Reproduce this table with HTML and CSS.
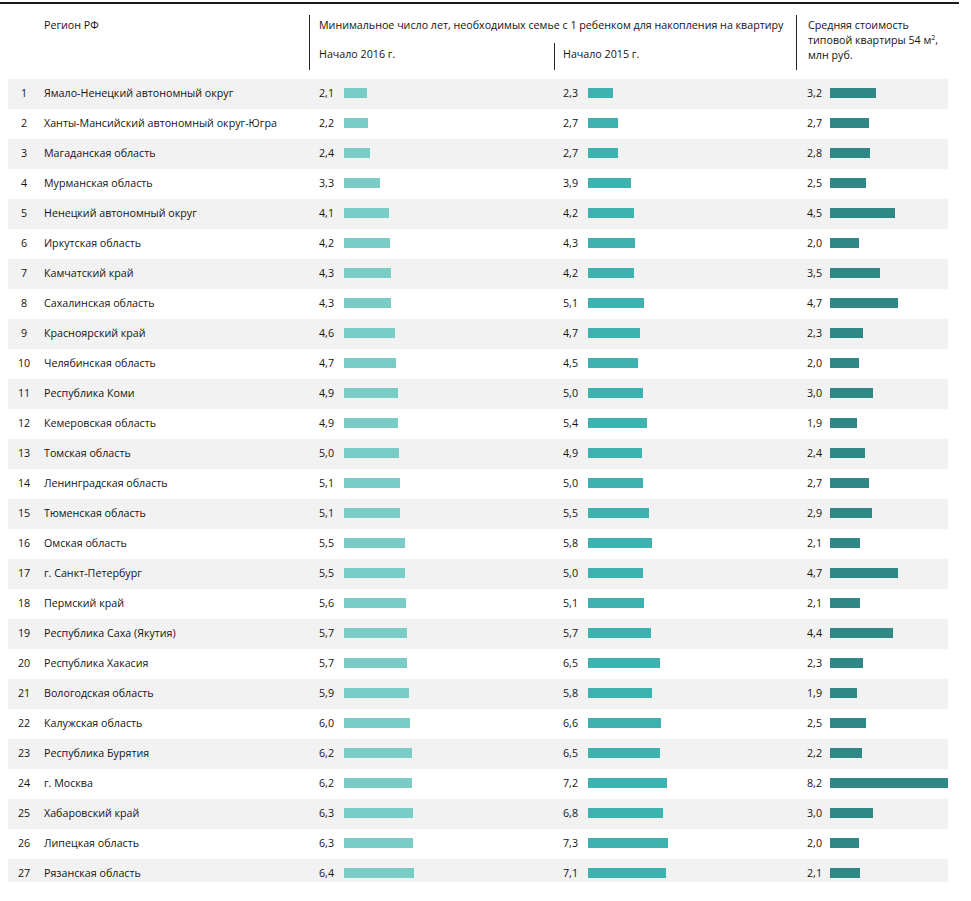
FILE: index.html
```html
<!DOCTYPE html>
<html lang="ru">
<head>
<meta charset="utf-8">
<title>Регион РФ</title>
<link rel="stylesheet" href="styles.css">
</head>
<body>
<div class="chart">
  <div class="head">
    <div class="h-num"></div>
    <div class="h-name">Регион РФ</div>
    <div class="h-years">
      <div class="h-title">Минимальное число лет, необходимых семье с 1 ребенком для накопления на квартиру</div>
      <div class="h-sub">
        <div class="h-sub1">Начало 2016 г.</div>
        <div class="h-sub2">Начало 2015 г.</div>
      </div>
    </div>
    <div class="h-price">Средняя стоимость<br>типовой квартиры 54 м<sup>2</sup>,<br>млн руб.</div>
  </div>
  <div class="rows">
    <div class="row"><div class="num">1</div><div class="name">Ямало-Ненецкий автономный округ</div><div class="c c2"><span class="v">2,1</span><span class="bar b2" style="width:23px"></span></div><div class="c c3"><span class="v">2,3</span><span class="bar b3" style="width:25px"></span></div><div class="c c4"><span class="v">3,2</span><span class="bar b4" style="width:46px"></span></div></div>
    <div class="row"><div class="num">2</div><div class="name">Ханты-Мансийский автономный округ-Югра</div><div class="c c2"><span class="v">2,2</span><span class="bar b2" style="width:24px"></span></div><div class="c c3"><span class="v">2,7</span><span class="bar b3" style="width:30px"></span></div><div class="c c4"><span class="v">2,7</span><span class="bar b4" style="width:39px"></span></div></div>
    <div class="row"><div class="num">3</div><div class="name">Магаданская область</div><div class="c c2"><span class="v">2,4</span><span class="bar b2" style="width:26px"></span></div><div class="c c3"><span class="v">2,7</span><span class="bar b3" style="width:30px"></span></div><div class="c c4"><span class="v">2,8</span><span class="bar b4" style="width:40px"></span></div></div>
    <div class="row"><div class="num">4</div><div class="name">Мурманская область</div><div class="c c2"><span class="v">3,3</span><span class="bar b2" style="width:36px"></span></div><div class="c c3"><span class="v">3,9</span><span class="bar b3" style="width:43px"></span></div><div class="c c4"><span class="v">2,5</span><span class="bar b4" style="width:36px"></span></div></div>
    <div class="row"><div class="num">5</div><div class="name">Ненецкий автономный округ</div><div class="c c2"><span class="v">4,1</span><span class="bar b2" style="width:45px"></span></div><div class="c c3"><span class="v">4,2</span><span class="bar b3" style="width:46px"></span></div><div class="c c4"><span class="v">4,5</span><span class="bar b4" style="width:65px"></span></div></div>
    <div class="row"><div class="num">6</div><div class="name">Иркутская область</div><div class="c c2"><span class="v">4,2</span><span class="bar b2" style="width:46px"></span></div><div class="c c3"><span class="v">4,3</span><span class="bar b3" style="width:47px"></span></div><div class="c c4"><span class="v">2,0</span><span class="bar b4" style="width:29px"></span></div></div>
    <div class="row"><div class="num">7</div><div class="name">Камчатский край</div><div class="c c2"><span class="v">4,3</span><span class="bar b2" style="width:47px"></span></div><div class="c c3"><span class="v">4,2</span><span class="bar b3" style="width:46px"></span></div><div class="c c4"><span class="v">3,5</span><span class="bar b4" style="width:50px"></span></div></div>
    <div class="row"><div class="num">8</div><div class="name">Сахалинская область</div><div class="c c2"><span class="v">4,3</span><span class="bar b2" style="width:47px"></span></div><div class="c c3"><span class="v">5,1</span><span class="bar b3" style="width:56px"></span></div><div class="c c4"><span class="v">4,7</span><span class="bar b4" style="width:68px"></span></div></div>
    <div class="row"><div class="num">9</div><div class="name">Красноярский край</div><div class="c c2"><span class="v">4,6</span><span class="bar b2" style="width:51px"></span></div><div class="c c3"><span class="v">4,7</span><span class="bar b3" style="width:52px"></span></div><div class="c c4"><span class="v">2,3</span><span class="bar b4" style="width:33px"></span></div></div>
    <div class="row"><div class="num">10</div><div class="name">Челябинская область</div><div class="c c2"><span class="v">4,7</span><span class="bar b2" style="width:52px"></span></div><div class="c c3"><span class="v">4,5</span><span class="bar b3" style="width:50px"></span></div><div class="c c4"><span class="v">2,0</span><span class="bar b4" style="width:29px"></span></div></div>
    <div class="row"><div class="num">11</div><div class="name">Республика Коми</div><div class="c c2"><span class="v">4,9</span><span class="bar b2" style="width:54px"></span></div><div class="c c3"><span class="v">5,0</span><span class="bar b3" style="width:55px"></span></div><div class="c c4"><span class="v">3,0</span><span class="bar b4" style="width:43px"></span></div></div>
    <div class="row"><div class="num">12</div><div class="name">Кемеровская область</div><div class="c c2"><span class="v">4,9</span><span class="bar b2" style="width:54px"></span></div><div class="c c3"><span class="v">5,4</span><span class="bar b3" style="width:59px"></span></div><div class="c c4"><span class="v">1,9</span><span class="bar b4" style="width:27px"></span></div></div>
    <div class="row"><div class="num">13</div><div class="name">Томская область</div><div class="c c2"><span class="v">5,0</span><span class="bar b2" style="width:55px"></span></div><div class="c c3"><span class="v">4,9</span><span class="bar b3" style="width:54px"></span></div><div class="c c4"><span class="v">2,4</span><span class="bar b4" style="width:35px"></span></div></div>
    <div class="row"><div class="num">14</div><div class="name">Ленинградская область</div><div class="c c2"><span class="v">5,1</span><span class="bar b2" style="width:56px"></span></div><div class="c c3"><span class="v">5,0</span><span class="bar b3" style="width:55px"></span></div><div class="c c4"><span class="v">2,7</span><span class="bar b4" style="width:39px"></span></div></div>
    <div class="row"><div class="num">15</div><div class="name">Тюменская область</div><div class="c c2"><span class="v">5,1</span><span class="bar b2" style="width:56px"></span></div><div class="c c3"><span class="v">5,5</span><span class="bar b3" style="width:61px"></span></div><div class="c c4"><span class="v">2,9</span><span class="bar b4" style="width:42px"></span></div></div>
    <div class="row"><div class="num">16</div><div class="name">Омская область</div><div class="c c2"><span class="v">5,5</span><span class="bar b2" style="width:61px"></span></div><div class="c c3"><span class="v">5,8</span><span class="bar b3" style="width:64px"></span></div><div class="c c4"><span class="v">2,1</span><span class="bar b4" style="width:30px"></span></div></div>
    <div class="row"><div class="num">17</div><div class="name">г. Санкт-Петербург</div><div class="c c2"><span class="v">5,5</span><span class="bar b2" style="width:61px"></span></div><div class="c c3"><span class="v">5,0</span><span class="bar b3" style="width:55px"></span></div><div class="c c4"><span class="v">4,7</span><span class="bar b4" style="width:68px"></span></div></div>
    <div class="row"><div class="num">18</div><div class="name">Пермский край</div><div class="c c2"><span class="v">5,6</span><span class="bar b2" style="width:62px"></span></div><div class="c c3"><span class="v">5,1</span><span class="bar b3" style="width:56px"></span></div><div class="c c4"><span class="v">2,1</span><span class="bar b4" style="width:30px"></span></div></div>
    <div class="row"><div class="num">19</div><div class="name">Республика Саха (Якутия)</div><div class="c c2"><span class="v">5,7</span><span class="bar b2" style="width:63px"></span></div><div class="c c3"><span class="v">5,7</span><span class="bar b3" style="width:63px"></span></div><div class="c c4"><span class="v">4,4</span><span class="bar b4" style="width:63px"></span></div></div>
    <div class="row"><div class="num">20</div><div class="name">Республика Хакасия</div><div class="c c2"><span class="v">5,7</span><span class="bar b2" style="width:63px"></span></div><div class="c c3"><span class="v">6,5</span><span class="bar b3" style="width:72px"></span></div><div class="c c4"><span class="v">2,3</span><span class="bar b4" style="width:33px"></span></div></div>
    <div class="row"><div class="num">21</div><div class="name">Вологодская область</div><div class="c c2"><span class="v">5,9</span><span class="bar b2" style="width:65px"></span></div><div class="c c3"><span class="v">5,8</span><span class="bar b3" style="width:64px"></span></div><div class="c c4"><span class="v">1,9</span><span class="bar b4" style="width:27px"></span></div></div>
    <div class="row"><div class="num">22</div><div class="name">Калужская область</div><div class="c c2"><span class="v">6,0</span><span class="bar b2" style="width:66px"></span></div><div class="c c3"><span class="v">6,6</span><span class="bar b3" style="width:73px"></span></div><div class="c c4"><span class="v">2,5</span><span class="bar b4" style="width:36px"></span></div></div>
    <div class="row"><div class="num">23</div><div class="name">Республика Бурятия</div><div class="c c2"><span class="v">6,2</span><span class="bar b2" style="width:68px"></span></div><div class="c c3"><span class="v">6,5</span><span class="bar b3" style="width:72px"></span></div><div class="c c4"><span class="v">2,2</span><span class="bar b4" style="width:32px"></span></div></div>
    <div class="row"><div class="num">24</div><div class="name">г. Москва</div><div class="c c2"><span class="v">6,2</span><span class="bar b2" style="width:68px"></span></div><div class="c c3"><span class="v">7,2</span><span class="bar b3" style="width:79px"></span></div><div class="c c4"><span class="v">8,2</span><span class="bar b4" style="width:118px"></span></div></div>
    <div class="row"><div class="num">25</div><div class="name">Хабаровский край</div><div class="c c2"><span class="v">6,3</span><span class="bar b2" style="width:69px"></span></div><div class="c c3"><span class="v">6,8</span><span class="bar b3" style="width:75px"></span></div><div class="c c4"><span class="v">3,0</span><span class="bar b4" style="width:43px"></span></div></div>
    <div class="row"><div class="num">26</div><div class="name">Липецкая область</div><div class="c c2"><span class="v">6,3</span><span class="bar b2" style="width:69px"></span></div><div class="c c3"><span class="v">7,3</span><span class="bar b3" style="width:80px"></span></div><div class="c c4"><span class="v">2,0</span><span class="bar b4" style="width:29px"></span></div></div>
    <div class="row"><div class="num">27</div><div class="name">Рязанская область</div><div class="c c2"><span class="v">6,4</span><span class="bar b2" style="width:70px"></span></div><div class="c c3"><span class="v">7,1</span><span class="bar b3" style="width:78px"></span></div><div class="c c4"><span class="v">2,1</span><span class="bar b4" style="width:30px"></span></div></div>
  </div>
</div>
</body>
</html>
```

FILE: styles.css
```css
* { box-sizing: border-box; }
html, body { margin: 0; padding: 0; background: #fff; }
body {
  font-family: "Open Sans", "Noto Sans", sans-serif;
  font-size: 10.7px;
  color: #141414;
}
.chart {
  width: 959px;
  margin-top: 2px;
  border-top: 2px solid #1a1a1a;
}
.head, .row {
  display: grid;
  grid-template-columns: 36px 265px 245px 242px 152px;
  margin-left: 8px;
}
.head {
  margin-top: 11px;
  margin-bottom: 9px;
  height: 55px;
  line-height: 15px;
}
.h-name { padding-top: 3px; }
.h-years {
  grid-column: 3 / span 2;
  border-left: 1px solid #222;
  padding-top: 3px;
  display: flex;
  flex-direction: column;
}
.h-title { padding-left: 9px; white-space: nowrap; }
.h-sub {
  margin-top: 10px;
  flex: 1;
  display: grid;
  grid-template-columns: 244px 1fr;
}
.h-sub1 { padding-left: 9px; padding-top: 4px; }
.h-sub2 { border-left: 1px solid #222; padding-left: 8px; padding-top: 4px; }
.h-price {
  border-left: 1px solid #222;
  padding-left: 11px;
  padding-top: 3px;
  line-height: 15px;
}
.h-price sup { font-size: 7px; line-height: 0; vertical-align: 4px; }

.row {
  height: 30px;
  align-items: start;
  width: 940px;
}
.row:nth-child(odd) { background: #f2f2f2; }
.row:last-child { height: 23px; }
.num, .name, .c {
  height: 28px;
  display: flex;
  align-items: center;
}
.num { justify-content: center; padding-right: 4px; }
.name { white-space: nowrap; }
.c2 { padding-left: 10px; }
.c3 { padding-left: 9px; }
.c4 { padding-left: 11px; }
.v { width: 25px; flex: none; }
.c4 .v { width: 23px; }
.bar { display: block; height: 10px; flex: none; }
.b2 { background: #7accc7; }
.b3 { background: #3eb2ae; }
.b4 { background: #2f8885; }
```
